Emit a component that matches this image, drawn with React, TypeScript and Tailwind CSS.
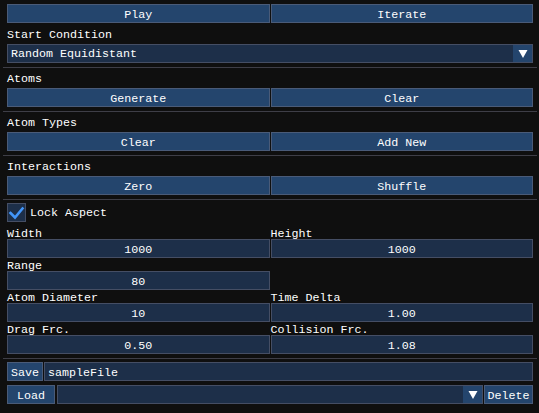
import type { ReactNode } from "react";

const BTN = "h-[19px] border border-[#4a5b78] bg-[#24456d] text-center leading-[20px]";
const FRAME = "h-[19px] border border-[#454e64] bg-[#1d2f49] leading-[20px]";

function Button({ children, className = "" }: { children: ReactNode; className?: string }) {
  return <div className={`${BTN} ${className}`}>{children}</div>;
}

function Label({ children }: { children?: ReactNode }) {
  return <div className="h-[13px] leading-[17px] whitespace-pre">{children}</div>;
}

function DragInput({ value }: { value: string }) {
  return <div className={`${FRAME} text-center`}>{value}</div>;
}

function Separator() {
  return <div className="-mx-[4px] mt-[4px] h-px bg-[#3e3e47]" />;
}

function Arrow() {
  return (
    <div className="flex h-full w-[19px] items-center justify-center bg-[#24456d]">
      <svg width="10" height="8" viewBox="0 0 10 8">
        <polygon points="0.5,0 9.5,0 5,8" fill="#ffffff" />
      </svg>
    </div>
  );
}

function Section({ title, left, right }: { title: string; left: string; right: string }) {
  return (
    <>
      <Separator />
      <div className="mt-[3px]">
        <Label>{title}</Label>
      </div>
      <div className="mt-[4px] grid grid-cols-2 gap-px">
        <Button>{left}</Button>
        <Button>{right}</Button>
      </div>
    </>
  );
}

export default function App() {
  return (
    <div className="h-[413px] w-[539px] overflow-hidden bg-[#0f0f0f] pl-[7px] pr-[6px] pt-[4px] font-['Liberation_Mono','DejaVu_Sans_Mono',monospace] text-[11.67px] text-white">
      <div className="grid grid-cols-2 gap-px">
        <Button>Play</Button>
        <Button>Iterate</Button>
      </div>

      <div className="mt-[4px]">
        <Label>Start Condition</Label>
      </div>
      <div className="mt-[4px] flex h-[19px] border border-[#454e64] bg-[#1d2f49]">
        <div className="flex-1 pl-[3px] leading-[18px]">Random Equidistant</div>
        <Arrow />
      </div>

      <Section title="Atoms" left="Generate" right="Clear" />
      <Section title="Atom Types" left="Clear" right="Add New" />
      <Section title="Interactions" left="Zero" right="Shuffle" />

      <Separator />
      <div className="mt-[3px] flex items-start gap-[4px]">
        <div className="h-[19px] w-[19px] border border-[#454e64] bg-[#1d2f49]">
          <svg width="17" height="17" viewBox="0 0 17 17" className="block">
            <polyline
              points="2.5,9 7,13.5 14.5,4.5"
              fill="none"
              stroke="#4296fa"
              strokeWidth="2.6"
              strokeLinecap="square"
            />
          </svg>
        </div>
        <div className="h-[19px] leading-[20px]">Lock Aspect</div>
      </div>

      <div className="mt-[4px] grid grid-cols-2 gap-x-px">
        <Label>Width</Label>
        <Label>Height</Label>
        <DragInput value="1000" />
        <DragInput value="1000" />
        <Label>Range</Label>
        <Label />
        <DragInput value="80" />
        <div />
        <Label>Atom Diameter</Label>
        <Label>Time Delta</Label>
        <DragInput value="10" />
        <DragInput value="1.00" />
        <Label>Drag Frc.</Label>
        <Label>Collision Frc.</Label>
        <DragInput value="0.50" />
        <DragInput value="1.08" />
      </div>

      <Separator />
      <div className="mt-[3px] flex gap-px">
        <Button className="w-[36px]">Save</Button>
        <div className={`${FRAME} flex-1 pl-[3px]`}>sampleFile</div>
      </div>

      <div className="mt-[4px] flex">
        <Button className="w-[48px]">Load</Button>
        <div className="ml-[2px] flex h-[19px] flex-1 border border-[#454e64] bg-[#1d2f49]">
          <div className="flex-1" />
          <Arrow />
        </div>
        <Button className="ml-px w-[49px]">Delete</Button>
      </div>
    </div>
  );
}
